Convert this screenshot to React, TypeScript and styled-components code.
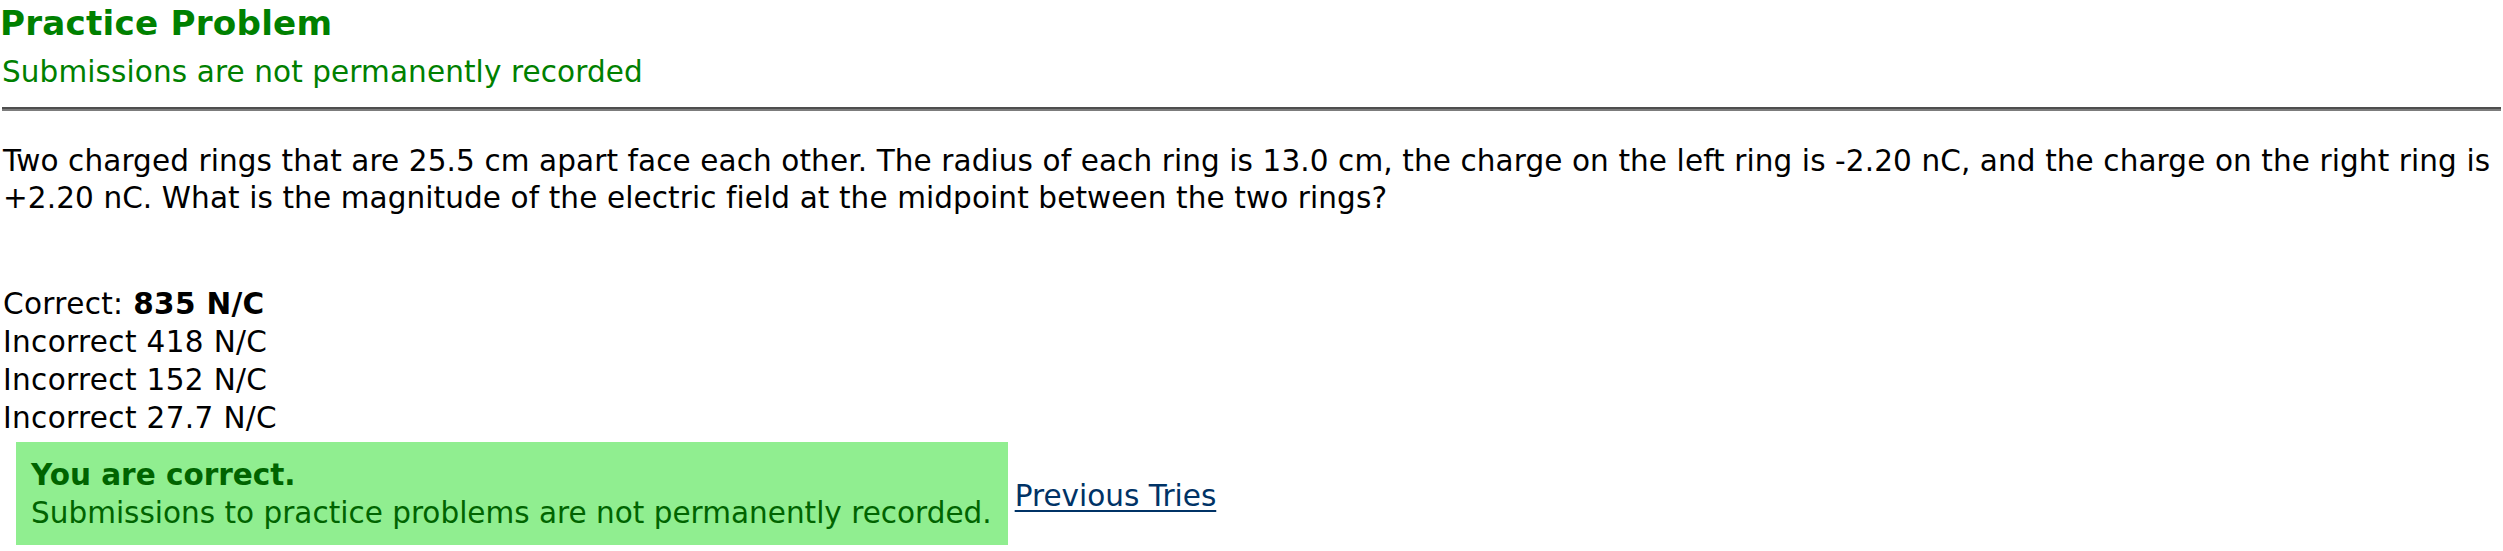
import styled, { createGlobalStyle } from 'styled-components';

const GlobalStyle = createGlobalStyle`
  html, body {
    margin: 0;
    padding: 0;
    background: #ffffff;
  }
  body {
    font-family: Verdana, "DejaVu Sans", sans-serif;
    font-size: 29.5px;
    letter-spacing: 0.1px;
    color: #000000;
  }
`;

const answers = [
  { label: 'Correct:', value: '835 N/C', correct: true },
  { label: 'Incorrect', value: '418 N/C', correct: false },
  { label: 'Incorrect', value: '152 N/C', correct: false },
  { label: 'Incorrect', value: '27.7 N/C', correct: false },
];

export default function App() {
  return (
    <>
      <GlobalStyle />
      <Page>
        <Header>
          <Title>Practice Problem</Title>
          <Notice>Submissions are not permanently recorded</Notice>
        </Header>
        <Rule />
        <Question>
          Two charged rings that are 25.5 cm apart face each other. The radius of each ring is 13.0 cm,
          the charge on the left ring is -2.20 nC, and the charge on the right ring is +2.20 nC. What is
          the magnitude of the electric field at the midpoint between the two rings?
        </Question>
        <AnswerList>
          {answers.map((a, i) => (
            <Answer key={i}>
              {a.label} {a.correct ? <strong>{a.value}</strong> : a.value}
            </Answer>
          ))}
        </AnswerList>
        <ResultRow>
          <ResultBox>
            <ResultTitle>You are correct.</ResultTitle>
            <ResultText>Submissions to practice problems are not permanently recorded.</ResultText>
          </ResultBox>
          <TriesLink href="#">Previous Tries</TriesLink>
        </ResultRow>
      </Page>
    </>
  );
}

const Page = styled.div`
  display: flex;
  flex-direction: column;
  padding: 3px 2px 0 3px;
`;

const Header = styled.div`
  display: flex;
  flex-direction: column;
  gap: 11px;
`;

const Title = styled.h3`
  margin: 0 0 0 -3px;
  font-size: 34.2px;
  line-height: 40px;
  font-weight: bold;
  letter-spacing: 0.2px;
  color: #008000;
`;

const Notice = styled.div`
  margin-left: -1px;
  color: #008000;
  line-height: 37px;
`;

const Rule = styled.div`
  margin: 16px 0 0 -1px;
  height: 2px;
  background: #4e4e4e;
  border-bottom: 2px solid #7c7c7c;
`;

const Question = styled.p`
  margin: 32px 0 0;
  line-height: 36.6px;
`;

const AnswerList = styled.div`
  display: flex;
  flex-direction: column;
  margin-top: 70px;
`;

const Answer = styled.div`
  line-height: 37.8px;
  letter-spacing: 0.35px;

  strong {
    font-weight: bold;
  }
`;

const ResultRow = styled.div`
  display: flex;
  align-items: center;
  gap: 7px;
  margin: 5px 0 0 13px;
`;

const ResultBox = styled.div`
  display: flex;
  flex-direction: column;
  background: #90ee90;
  color: #006400;
  padding: 14px 16px 13px 15px;
  line-height: 38px;
  letter-spacing: 0;
`;

const ResultTitle = styled.div`
  font-weight: bold;
`;

const ResultText = styled.div``;

const TriesLink = styled.a`
  color: #003366;
  line-height: 37px;
  letter-spacing: 0;
  text-decoration: underline;
  text-decoration-thickness: 2px;
  text-underline-offset: 4px;
  margin-top: 6px;
`;
